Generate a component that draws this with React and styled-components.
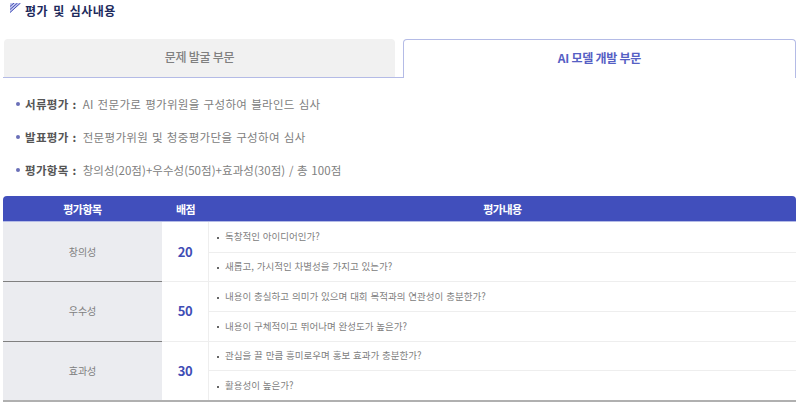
import styled, { createGlobalStyle } from "styled-components";

const GlobalStyle = createGlobalStyle`
  html, body {
    margin: 0;
    padding: 0;
    background: #fff;
    font-family: "Noto Sans CJK KR", "Noto Sans", sans-serif;
  }
`;

const Page = styled.div`
  width: 800px;
  height: 405px;
  overflow: hidden;
  box-sizing: border-box;
  padding: 0 4px 0 3px;
`;

const Title = styled.h2`
  display: flex;
  align-items: center;
  gap: 4px;
  margin: 0 0 0 7px;
  height: 22px;
  font-size: 12px;
  font-weight: 700;
  line-height: 22px;
  letter-spacing: 0.45px;
  word-spacing: 2px;
  color: #1d2a5c;
`;

const TitleIcon = styled.svg`
  width: 11px;
  height: 10px;
  margin-top: -7px;
`;

const Tabs = styled.div`
  display: flex;
  margin-top: 17px;
  height: 39px;
  box-sizing: border-box;
  border-bottom: 1px solid #b4bbe6;
`;

const Tab = styled.div`
  box-sizing: border-box;
  height: ${(p) => (p.$active ? "39px" : "38px")};
  flex: 1;
  margin-left: ${(p) => (p.$active ? "8px" : "1px")};
  display: flex;
  align-items: center;
  justify-content: center;
  font-size: 12px;
  font-weight: ${(p) => (p.$active ? 700 : 500)};
  letter-spacing: -0.25px;
  padding-bottom: 3px;
  border-radius: 4px 4px 0 0;
  background: ${(p) => (p.$active ? "#fff" : "#f1f1f1")};
  color: ${(p) => (p.$active ? "#5560c4" : "#808080")};
  border: ${(p) => (p.$active ? "1px solid #b4bbe6" : "none")};
  border-bottom: none;
`;

const List = styled.ul`
  list-style: none;
  margin: 9px 0 0;
  padding: 0 0 0 13px;
  height: 109px;
`;

const ListItem = styled.li`
  display: flex;
  align-items: center;
  height: 33px;
  font-size: 11.5px;
  letter-spacing: ${(p) => (p.$tight ? "0.05px" : "0.33px")};
  word-spacing: 1px;
  color: #808080;
  &::before {
    content: "";
    width: 4px;
    height: 4px;
    border-radius: 50%;
    background: #6a6fb8;
    margin-right: 5px;
  }
`;

const ItemLabel = styled.strong`
  font-weight: 700;
  letter-spacing: 0.33px;
  color: #555;
  margin-right: 6px;
`;

const Table = styled.table`
  width: 793px;
  table-layout: fixed;
  border-collapse: separate;
  border-spacing: 0;
  border-bottom: 2px solid #b0b0b0;
`;

const HeadCell = styled.th`
  height: 25px;
  padding: 0;
  background: #414fbc;
  border-bottom: 1px solid #b4bbe6;
  color: #fff;
  font-size: 11px;
  font-weight: 700;
  letter-spacing: -0.5px;
  text-align: center;
  &:first-child {
    border-top-left-radius: 4px;
  }
  &:last-child {
    border-top-right-radius: 4px;
  }
`;

const LabelCell = styled.td`
  padding: 0 0 1px;
  background: #ebecf0;
  color: #808080;
  font-size: 10px;
  text-align: center;
  border-top: ${(p) => (p.$first ? "none" : "1px solid #808080")};
`;

const ScoreCell = styled.td`
  padding: 0 0 1px;
  color: #3f4db5;
  font-size: 13px;
  font-weight: 700;
  letter-spacing: -0.5px;
  text-align: center;
  border-right: 1px solid #eeeeee;
  border-top: ${(p) => (p.$first ? "none" : "1px solid #eeeeee")};
`;

const ContentCell = styled.td`
  box-sizing: border-box;
  height: 29.67px;
  padding: 0 0 1px 8px;
  color: #808080;
  font-size: 9.5px;
  word-spacing: 0.75px;
  border-top: ${(p) => (p.$first ? "none" : "1px solid #eeeeee")};
  &::before {
    content: "";
    display: inline-block;
    width: 2px;
    height: 2px;
    background: #666;
    vertical-align: middle;
    margin-right: 6px;
  }
`;

const rows = [
  {
    label: "창의성",
    score: 20,
    items: ["독창적인 아이디어인가?", "새롭고, 가시적인 차별성을 가지고 있는가?"],
  },
  {
    label: "우수성",
    score: 50,
    items: [
      "내용이 충실하고 의미가 있으며 대회 목적과의 연관성이 충분한가?",
      "내용이 구체적이고 뛰어나며 완성도가 높은가?",
    ],
  },
  {
    label: "효과성",
    score: 30,
    items: ["관심을 끌 만큼 흥미로우며 홍보 효과가 충분한가?", "활용성이 높은가?"],
  },
];

const App = () => {
  return (
    <Page>
      <GlobalStyle />
      <Title>
        <TitleIcon viewBox="0 0 11 10">
          <path d="M0 0h11L0 10z" fill="#c5c9ee" />
          <path d="M0 3.5L4 0M0 6.5L7.5 0M0 9.5L10.5 0" stroke="#4450b8" strokeWidth="1" fill="none" />
        </TitleIcon>
        평가 및 심사내용
      </Title>
      <Tabs>
        <Tab>문제 발굴 부문</Tab>
        <Tab $active>AI 모델 개발 부문</Tab>
      </Tabs>
      <List>
        <ListItem>
          <ItemLabel>서류평가 :</ItemLabel>AI 전문가로 평가위원을 구성하여 블라인드 심사
        </ListItem>
        <ListItem>
          <ItemLabel>발표평가 :</ItemLabel>전문평가위원 및 청중평가단을 구성하여 심사
        </ListItem>
        <ListItem $tight>
          <ItemLabel>평가항목 :</ItemLabel>창의성(20점)+우수성(50점)+효과성(30점) / 총 100점
        </ListItem>
      </List>
      <Table>
        <colgroup>
          <col style={{ width: 159 }} />
          <col style={{ width: 47 }} />
          <col />
        </colgroup>
        <thead>
          <tr>
            <HeadCell>평가항목</HeadCell>
            <HeadCell>배점</HeadCell>
            <HeadCell>평가내용</HeadCell>
          </tr>
        </thead>
        <tbody>
          {rows.map((row, i) =>
            row.items.map((item, j) => (
              <tr key={item}>
                {j === 0 && (
                  <>
                    <LabelCell rowSpan={2} $first={i === 0}>{row.label}</LabelCell>
                    <ScoreCell rowSpan={2} $first={i === 0}>{row.score}</ScoreCell>
                  </>
                )}
                <ContentCell $first={i === 0 && j === 0}>{item}</ContentCell>
              </tr>
            ))
          )}
        </tbody>
      </Table>
    </Page>
  );
};

export default App;
